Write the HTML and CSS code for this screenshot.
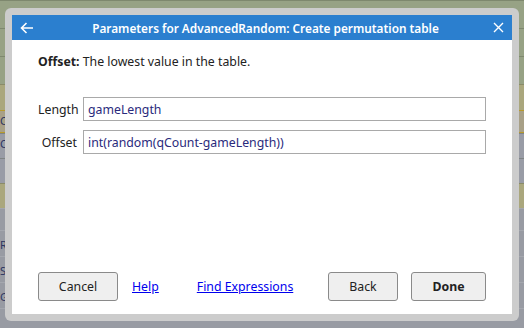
FILE: index.html
```html
<!DOCTYPE html>
<html lang="en">
<head>
    <meta charset="UTF-8">
    <meta name="viewport" content="width=device-width, initial-scale=1.0">
    <title>Parameters for AdvancedRandom</title>
    <link rel="stylesheet" href="styles.css">
</head>
<body>
    <!-- Blurred editor behind the dialog -->
    <div class="backdrop">
        <div class="band green"></div>
        <div class="band green"></div>
        <div class="band green"></div>
        <div class="band khaki"></div>
        <div class="band tan"><span class="peek">C</span></div>
        <div class="band slate"><span class="peek">C</span></div>
        <div class="band slate"></div>
        <div class="band khaki"></div>
        <div class="band grey first"></div>
        <div class="band grey"><span class="peek">R</span></div>
        <div class="band grey"><span class="peek">S</span></div>
        <div class="band grey"><span class="peek">G</span></div>
        <div class="band grey"></div>
    </div>

    <!-- Parameters dialog -->
    <div class="dialog">
        <div class="dialog-inner">
            <div class="titlebar">
                <svg class="back-icon" width="14" height="12" viewBox="0 0 14 12">
                    <path d="M13 6H1.5M6.5 1L1.5 6l5 5" fill="none" stroke="#fff" stroke-width="1.6"/>
                </svg>
                <span class="title">Parameters for AdvancedRandom: Create permutation table</span>
                <svg class="close-icon" width="11" height="11" viewBox="0 0 11 11">
                    <path d="M1 1l9 9M10 1l-9 9" fill="none" stroke="#fff" stroke-width="1.4"/>
                </svg>
            </div>

            <div class="content">
                <p class="desc"><b>Offset:</b> The lowest value in the table.</p>

                <div class="param-row">
                    <label for="p1">Length</label>
                    <input type="text" id="p1" value="gameLength">
                </div>
                <div class="param-row">
                    <label for="p2">Offset</label>
                    <input type="text" id="p2" value="int(random(qCount-gameLength))">
                </div>
            </div>

            <div class="footer">
                <button class="btn cancel">Cancel</button>
                <a href="#" class="link help">Help</a>
                <a href="#" class="link">Find Expressions</a>
                <span class="spacer"></span>
                <button class="btn back">Back</button>
                <button class="btn done">Done</button>
            </div>
        </div>
    </div>
</body>
</html>
```

FILE: styles.css
```css
body {
    margin: 0;
    padding: 0;
    width: 524px;
    height: 328px;
    overflow: hidden;
    position: relative;
    font-family: "Noto Sans", "Open Sans", sans-serif;
    font-size: 12.3px;
    color: #222;
}

/* background bands */
.backdrop {
    display: flex;
    flex-direction: column;
    height: 328px;
    background: #989ba3;
}
.band {
    flex: none;
    height: 25px;
    border-top: 1px solid rgba(80, 90, 70, 0.35);
    box-sizing: border-box;
    position: relative;
}
.green {
    background: #97a285;
    height: 28px;
}
.khaki {
    background: #aaa77d;
}
.khaki:nth-child(4) {
    height: 26px;
}
.tan {
    background: #a8a087;
    border-top: 1px solid #b89a2c;
    border-bottom: 1px solid #b89a2c;
    height: 23px;
}
.slate {
    background: #999ca6;
}
.grey {
    background: #989ba3;
    border-top: 1px solid rgba(255, 255, 255, 0.12);
    height: 26px;
}
.grey.first {
    height: 22px;
}
.peek {
    position: absolute;
    left: 0;
    top: 2px;
    color: #2b3560;
    font-size: 11px;
}
.grey .peek {
    top: 6px;
}

/* dialog */
.dialog {
    position: absolute;
    left: 5px;
    top: 8px;
    width: 514px;
    height: 313px;
    box-sizing: border-box;
    padding: 7px;
    background: #cccccc;
    border-radius: 6px;
}
.dialog-inner {
    background: #fff;
    height: 100%;
    display: flex;
    flex-direction: column;
}
.titlebar {
    height: 25px;
    background: #2b7fcf;
    color: #fff;
    display: flex;
    align-items: center;
    padding: 0 8px;
}
.title {
    flex: 1;
    text-align: center;
    font-weight: 600;
    font-size: 11.8px;
}
.back-icon {
    margin-right: 4px;
}

.content {
    padding: 13px 26px 0;
}
.desc {
    margin: 0 0 26px;
    line-height: 18px;
}
.param-row {
    display: flex;
    align-items: center;
    margin-bottom: 9px;
}
.param-row label {
    width: 39px;
    text-align: right;
    margin-right: 6px;
    white-space: nowrap;
}
.param-row input {
    flex: 1;
    height: 24px;
    box-sizing: border-box;
    border: 1px solid #a9a9a9;
    padding: 0 4px;
    font-family: inherit;
    font-size: 12.3px;
    color: #2a2a7c;
}

.footer {
    margin-top: auto;
    display: flex;
    align-items: center;
    padding: 0 26px 13px;
}
.btn {
    height: 29px;
    background: #efefef;
    border: 1px solid #8a8a8a;
    border-radius: 3px;
    font-family: inherit;
    font-size: 12.3px;
    color: #222;
}
.cancel {
    width: 80px;
}
.back {
    width: 70px;
    margin-right: 13px;
}
.done {
    width: 75px;
    font-weight: bold;
}
.link {
    color: #0000ee;
    text-decoration: underline;
    margin-left: 14px;
}
.help {
    margin-right: 24px;
}
.spacer {
    flex: 1;
}
```
